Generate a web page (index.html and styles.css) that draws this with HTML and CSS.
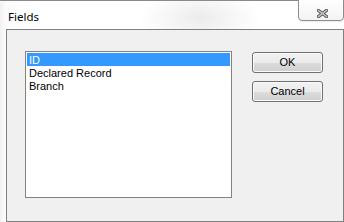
FILE: index.html
```html
<!DOCTYPE html>
<html lang="en">

<head>
    <meta charset="UTF-8">
    <title>Fields</title>
    <link rel="stylesheet" href="styles.css">
</head>

<body>
    <div class="window">
        <div class="titlebar">
            <span class="title">Fields</span>
            <div class="close-btn">
                <svg width="11" height="9" viewBox="0 0 11 9">
                    <path d="M1.5 1.5 L9.5 7.5 M9.5 1.5 L1.5 7.5" stroke="#5a5a5a" stroke-width="3.4" stroke-linecap="square" fill="none"/>
                    <path d="M1.5 1.5 L9.5 7.5 M9.5 1.5 L1.5 7.5" stroke="#c8c8c8" stroke-width="1.4" stroke-linecap="square" fill="none"/>
                </svg>
            </div>
        </div>

        <div class="client">
            <div class="listbox">
                <div class="item selected">ID</div>
                <div class="item">Declared Record</div>
                <div class="item">Branch</div>
            </div>
            <div class="buttons">
                <div class="btn">OK</div>
                <div class="btn">Cancel</div>
            </div>
        </div>
    </div>
</body>

</html>
```

FILE: styles.css
```css
html {
    background-color: #fff;
}

body {
    margin: 0;
}

.window {
    width: 344px;
    height: 222px;
    display: flex;
    flex-direction: column;
    background: radial-gradient(ellipse 60px 30px at 200px 18px, #ececec, rgba(255, 255, 255, 0)),
        linear-gradient(90deg, #f2f2f2 0, #fcfcfc 6px, #fff 40px);
    border-top-left-radius: 5px;
}

.titlebar {
    position: relative;
    height: 29px;
    box-sizing: border-box;
    padding: 6px 0 0 8px;
    border-top: 1px solid #8a8a8a;
}

.title {
    font-family: "Noto Sans", sans-serif;
    font-size: 11.5px;
    line-height: 16px;
    color: #000;
}

.close-btn {
    position: absolute;
    top: -2px;
    left: 298px;
    width: 46px;
    height: 22px;
    box-sizing: border-box;
    padding: 9px 0 0 18px;
    border: 1px solid #8d8d8d;
    border-radius: 0 0 4px 4px;
    background: linear-gradient(#ffffff, #f3f3f3);
    box-shadow: 0 1px 1px rgba(0, 0, 0, 0.08);
}

.close-btn svg {
    display: block;
}

.client {
    flex: 1;
    width: 338px;
    box-sizing: border-box;
    margin-left: 6px;
    padding: 21px 0 0 18px;
    display: flex;
    gap: 20px;
    align-items: flex-start;
    border: 1px solid #7f7f7f;
    background: #f0f0f0;
}

.listbox {
    width: 207px;
    height: 147px;
    box-sizing: border-box;
    padding: 1px;
    border: 1px solid #828282;
    background: #fff;
}

.item {
    height: 13px;
    line-height: 15px;
    padding-left: 2px;
    font-family: "Liberation Sans", Arial, sans-serif;
    font-size: 11px;
    color: #000;
    white-space: nowrap;
}

.item.selected {
    background: #3399ff;
    color: #fff;
}

.buttons {
    margin-top: 1px;
    display: flex;
    flex-direction: column;
    gap: 8px;
}

.btn {
    width: 71px;
    height: 21px;
    box-sizing: border-box;
    border: 1px solid #707070;
    border-radius: 3px;
    background: linear-gradient(#f2f2f2 0%, #ebebeb 50%, #dddddd 50%, #cfcfcf 100%);
    box-shadow: inset 0 0 0 1px #fbfbfb;
    text-align: center;
    line-height: 19px;
    font-family: "Liberation Sans", Arial, sans-serif;
    font-size: 11px;
    color: #000;
}
```
